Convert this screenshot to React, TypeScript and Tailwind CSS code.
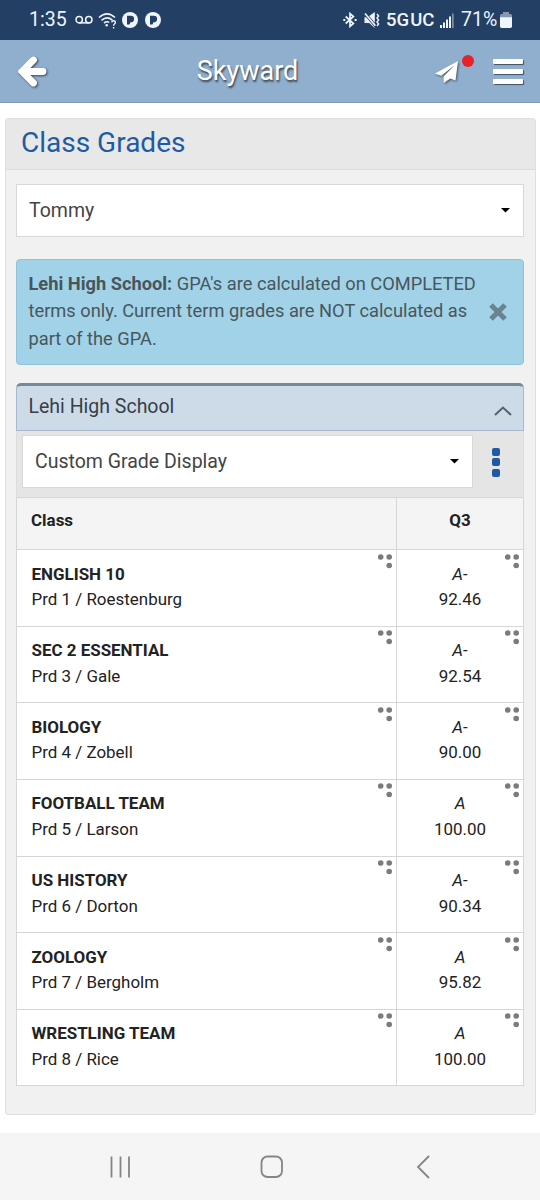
const classes = [
  { name: 'ENGLISH 10', detail: 'Prd 1 / Roestenburg', letter: 'A-', score: '92.46' },
  { name: 'SEC 2 ESSENTIAL', detail: 'Prd 3 / Gale', letter: 'A-', score: '92.54' },
  { name: 'BIOLOGY', detail: 'Prd 4 / Zobell', letter: 'A-', score: '90.00' },
  { name: 'FOOTBALL TEAM', detail: 'Prd 5 / Larson', letter: 'A', score: '100.00' },
  { name: 'US HISTORY', detail: 'Prd 6 / Dorton', letter: 'A-', score: '90.34' },
  { name: 'ZOOLOGY', detail: 'Prd 7 / Bergholm', letter: 'A', score: '95.82' },
  { name: 'WRESTLING TEAM', detail: 'Prd 8 / Rice', letter: 'A', score: '100.00' },
]

function PandoraIcon() {
  return (
    <svg viewBox="0 0 16 16" className="h-4 w-4">
      <circle cx="8" cy="8" r="8" fill="#eef5fd" />
      <path d="M5 3.8h3.800a3.300 3.300 0 0 1 0 6.600H8v1a1 1 0 0 1-1 1H5z" fill="#233f64" />
    </svg>
  )
}

function StatusBar() {
  return (
    <div className="flex h-10 items-center justify-between bg-[#233f64] pr-[28px] pl-[29px] text-[#eef5fd]">
      <div className="flex items-center">
        <span className="w-[46px] text-[19.5px] leading-none whitespace-nowrap">1:35</span>
        <svg viewBox="0 0 18 10" className="h-[10px] w-[18px]" fill="none" stroke="currentColor" strokeWidth="1.5">
          <circle cx="4.2" cy="4.7" r="3.2" />
          <circle cx="13.8" cy="4.7" r="3.2" />
          <path d="M4.2 7.9h9.6" />
        </svg>
        <svg viewBox="0 0 20 17" className="ml-[5px] h-[17px] w-5" fill="none" stroke="currentColor" strokeWidth="1.6">
          <path d="M1 5.5Q9 -1.8 17 5.5M3.5 8.4Q9 3.6 14.4 8.2M6 11Q9 8.7 11.2 10.5" />
          <circle cx="8.7" cy="13.2" r="1.3" fill="currentColor" stroke="none" />
          <path d="M13.7 10.3q.2-1.6 1.9-1.6 1.8 0 1.8 1.6 0 1-1 1.7-.8.5-.8 1.7M15.6 15v1.6" strokeWidth="1.4" />
        </svg>
        <span className="ml-[4px] flex gap-[7px]">
          <PandoraIcon />
          <PandoraIcon />
        </span>
      </div>
      <div className="flex items-center">
        <svg viewBox="0 0 14 16" className="h-4 w-[14px]" fill="none" stroke="currentColor" strokeWidth="1.7">
          <path d="M2.700 4.500l7.700 7L7 14.400V1.600l3.400 2.900-7.700 7" />
          <path d="M.300 8h2M11.600 8h2" strokeWidth="2" />
        </svg>
        <svg viewBox="0 0 16 16" className="ml-[7px] h-4 w-4">
          <path d="M.5 5.3h3L10.8 0v16L5.2 10.9H.5z" fill="currentColor" />
          <path d="M1 1.5l11 13" stroke="#233f64" strokeWidth="3" />
          <path d="M1 1.5l10.4 12.2" stroke="currentColor" strokeWidth="1.7" />
          <path d="M13 2l1.6 2L13 6l1.6 2L13 10l1.6 2-1.6 2" fill="none" stroke="currentColor" strokeWidth="1.4" />
        </svg>
        <span className="ml-[6px] w-[49px] text-[18.5px] leading-none font-medium whitespace-nowrap">5G<span className="ml-px">UC</span></span>
        <svg viewBox="0 0 14 15" className="ml-[5px] h-[15px] w-[14px]" fill="currentColor">
          <path d="M0 12h2v3H0zM3 9.500h2V15H3zM6 6.500h2V15H6zM9 3.500h2V15H9z" />
          <path d="M12 .5h1.700V15H12z" opacity=".45" />
        </svg>
        <span className="ml-[7px] w-[38px] text-[19.500px] leading-none whitespace-nowrap">71%</span>
        <svg viewBox="0 0 12 16" className="ml-px h-4 w-3">
          <path d="M3 0h6v2h1.500Q12 2 12 3.500V6H0V3.500Q0 2 1.500 2H3z" fill="#8797ad" />
          <path d="M0 5.200h12v9Q12 16 10.300 16H1.700Q0 16 0 14.200z" fill="#eef5fd" />
        </svg>
      </div>
    </div>
  )
}

function AppBar() {
  return (
    <div className="grid h-[63px] grid-cols-[1fr_auto_1fr] items-center border-b border-[#8399b3] bg-[#90aecd] pr-[17px] pl-[18px] text-white">
      <svg viewBox="0 0 30 32" className="mt-[2px] h-8 w-[30px] drop-shadow-[1px_1px_1px_rgba(0,0,0,0.6)]">
        <path d="M15.500 4L4 15.500 15.500 27M5 15.500H25" fill="none" stroke="currentColor" strokeWidth="6.800" strokeLinecap="round" strokeLinejoin="miter" />
      </svg>
      <h1 className="mr-[46px] text-[27px] leading-none [text-shadow:1px_2px_2px_rgba(0,0,0,0.6)]">Skyward</h1>
      <div className="flex items-center justify-end">
        <div className="relative">
          <svg viewBox="0 0 24 24" className="mr-[34px] h-6 w-6 drop-shadow-[1px_1px_1px_rgba(0,0,0,0.5)]">
            <path d="M0 14.500L23 2 20.500 21.500l-5.200-2L8.700 24v-6.600L19.800 6 6.300 16.700z" fill="currentColor" />
          </svg>
          <span className="absolute -top-[4px] left-[27px] h-[11.500px] w-[11.500px] rounded-full bg-[#e8202a]" />
        </div>
        <div className="flex w-[30px] flex-col gap-[5px]">
          <span className="h-[5px] rounded-[1px] bg-white shadow-[1px_1px_1px_rgba(0,0,0,0.55)]" />
          <span className="h-[5px] rounded-[1px] bg-white shadow-[1px_1px_1px_rgba(0,0,0,0.55)]" />
          <span className="h-[5px] rounded-[1px] bg-white shadow-[1px_1px_1px_rgba(0,0,0,0.55)]" />
        </div>
      </div>
    </div>
  )
}

function Select({ label }: { label: string }) {
  return (
    <div className="flex h-[53px] flex-1 items-center justify-between border border-[#d8d8d8] bg-white pr-[13px] pl-[12px] text-[19.500px] text-[#444]">
      <span>{label}</span>
      <svg viewBox="0 0 8 4" className="h-[4.500px] w-[9px]" preserveAspectRatio="none">
        <path d="M0 0h8L4 4z" fill="#000" />
      </svg>
    </div>
  )
}

function CellDots() {
  return (
    <svg viewBox="0 0 14 15" className="absolute top-[3.500px] right-[4px] h-[15px] w-[14px]" fill="#7b7b7b">
      <circle cx="2.700" cy="3" r="2.800" />
      <circle cx="11.200" cy="3" r="2.800" />
      <circle cx="11.200" cy="11.500" r="2.800" />
    </svg>
  )
}

function GradeTable() {
  return (
    <div className="border border-[#d6d6d6] bg-white text-[16.950px] text-[#222]">
      <div className="grid h-[51px] grid-cols-[379px_1fr] bg-[#f4f4f4] font-bold">
        <div className="flex items-center pb-[5px] pl-[14px]">Class</div>
        <div className="flex items-center justify-center border-l border-[#d6d6d6] pb-[5px]">Q3</div>
      </div>
      {classes.map((c) => (
        <div key={c.name} className="grid h-[76.650px] grid-cols-[379px_1fr] border-t border-[#d6d6d6] leading-[25.500px]">
          <div className="relative pt-[11.500px] pl-[14.500px]">
            <p className="font-bold">{c.name}</p>
            <p>{c.detail}</p>
            <CellDots />
          </div>
          <div className="relative border-l border-[#d6d6d6] pt-[11.500px] text-center">
            <p className="italic">{c.letter}</p>
            <p>{c.score}</p>
            <CellDots />
          </div>
        </div>
      ))}
    </div>
  )
}

function BottomNav() {
  return (
    <div className="flex h-[67px] items-center justify-between bg-[#f5f5f5] pr-[110px] pl-[110px] text-[#858585]">
      <svg viewBox="0 0 22 22" className="h-[22px] w-[22px]" stroke="currentColor" strokeWidth="1.800">
        <path d="M1.500 .5v21M10.500 .5v21M19 .5v21" />
      </svg>
      <svg viewBox="0 0 24 24" className="mr-[5px] h-6 w-6" fill="none" stroke="currentColor" strokeWidth="1.800">
        <rect x="1.500" y="1.500" width="20.500" height="20.500" rx="6" />
      </svg>
      <svg viewBox="0 0 14 24" className="h-6 w-[14px]" fill="none" stroke="currentColor" strokeWidth="1.800">
        <path d="M13 1L2 12l11 11" />
      </svg>
    </div>
  )
}

export default function App() {
  return (
    <div className="flex h-[1200px] w-[540px] flex-col overflow-hidden bg-white font-[Roboto,sans-serif]">
      <StatusBar />
      <AppBar />

      <main className="flex-1 pt-[15px] pr-[4px] pl-[5px]">
        <section className="h-[997px] rounded-[3px] border border-[#dfdfdf] bg-[#f1f1f1]">
          <h2 className="flex h-[51px] items-center border-b border-[#dcdcdc] bg-[#e8e8e8] pb-[2px] pl-[15px] text-[28px] text-[#1f5ba4]">Class Grades</h2>

          <div className="pt-[14px] pr-[11px] pl-[10px]">
            <div className="flex">
              <Select label="Tommy" />
            </div>

            <div className="mt-[22px] flex h-[106px] items-center justify-between rounded-[4px] border border-[#8fc2d8] bg-[#a1d2e7] pr-[15px] pl-[11.500px] text-[#48565c]">
              <p className="-mt-[2px] text-[18.250px] leading-[27.500px] whitespace-nowrap">
                <b>Lehi High School:</b> GPA's are calculated on COMPLETED
                <br />
                terms only. Current term grades are NOT calculated as
                <br />
                part of the GPA.
              </p>
              <svg viewBox="0 0 20 20" className="h-5 w-5 shrink-0">
                <path d="M3 3l14 14M17 3L3 17" stroke="#69838f" strokeWidth="5" />
              </svg>
            </div>

            <div className="mt-[18px]">
              <div className="flex h-[48px] items-center justify-between rounded-t-[5px] border border-t-[3px] border-[#a5b8ce] border-t-[#768998] bg-[#cddbe9] pr-[11px] pb-[2px] pl-[11.500px] text-[19.500px] text-[#373f47]">
                <span>Lehi High School</span>
                <svg viewBox="0 0 18 10" className="mt-[7px] h-[10px] w-[18px]" fill="none" stroke="#555f69" strokeWidth="2">
                  <path d="M1 9l8-7.500L17 9" />
                </svg>
              </div>
              <div className="flex h-[66px] items-start border-x border-[#dcdcdc] bg-[#e5e5e5] pt-[4px] pl-[5px]">
                <Select label="Custom Grade Display" />
                <div className="flex w-[50px] flex-col items-center gap-[2.500px] pt-[12.500px] pr-[5px]">
                  <span className="h-2 w-2 rounded-[2px] bg-[#1f5ba4]" />
                  <span className="h-2 w-2 rounded-[2px] bg-[#1f5ba4]" />
                  <span className="h-2 w-2 rounded-[2px] bg-[#1f5ba4]" />
                </div>
              </div>
              <GradeTable />
            </div>
          </div>
        </section>
      </main>

      <BottomNav />
    </div>
  )
}
